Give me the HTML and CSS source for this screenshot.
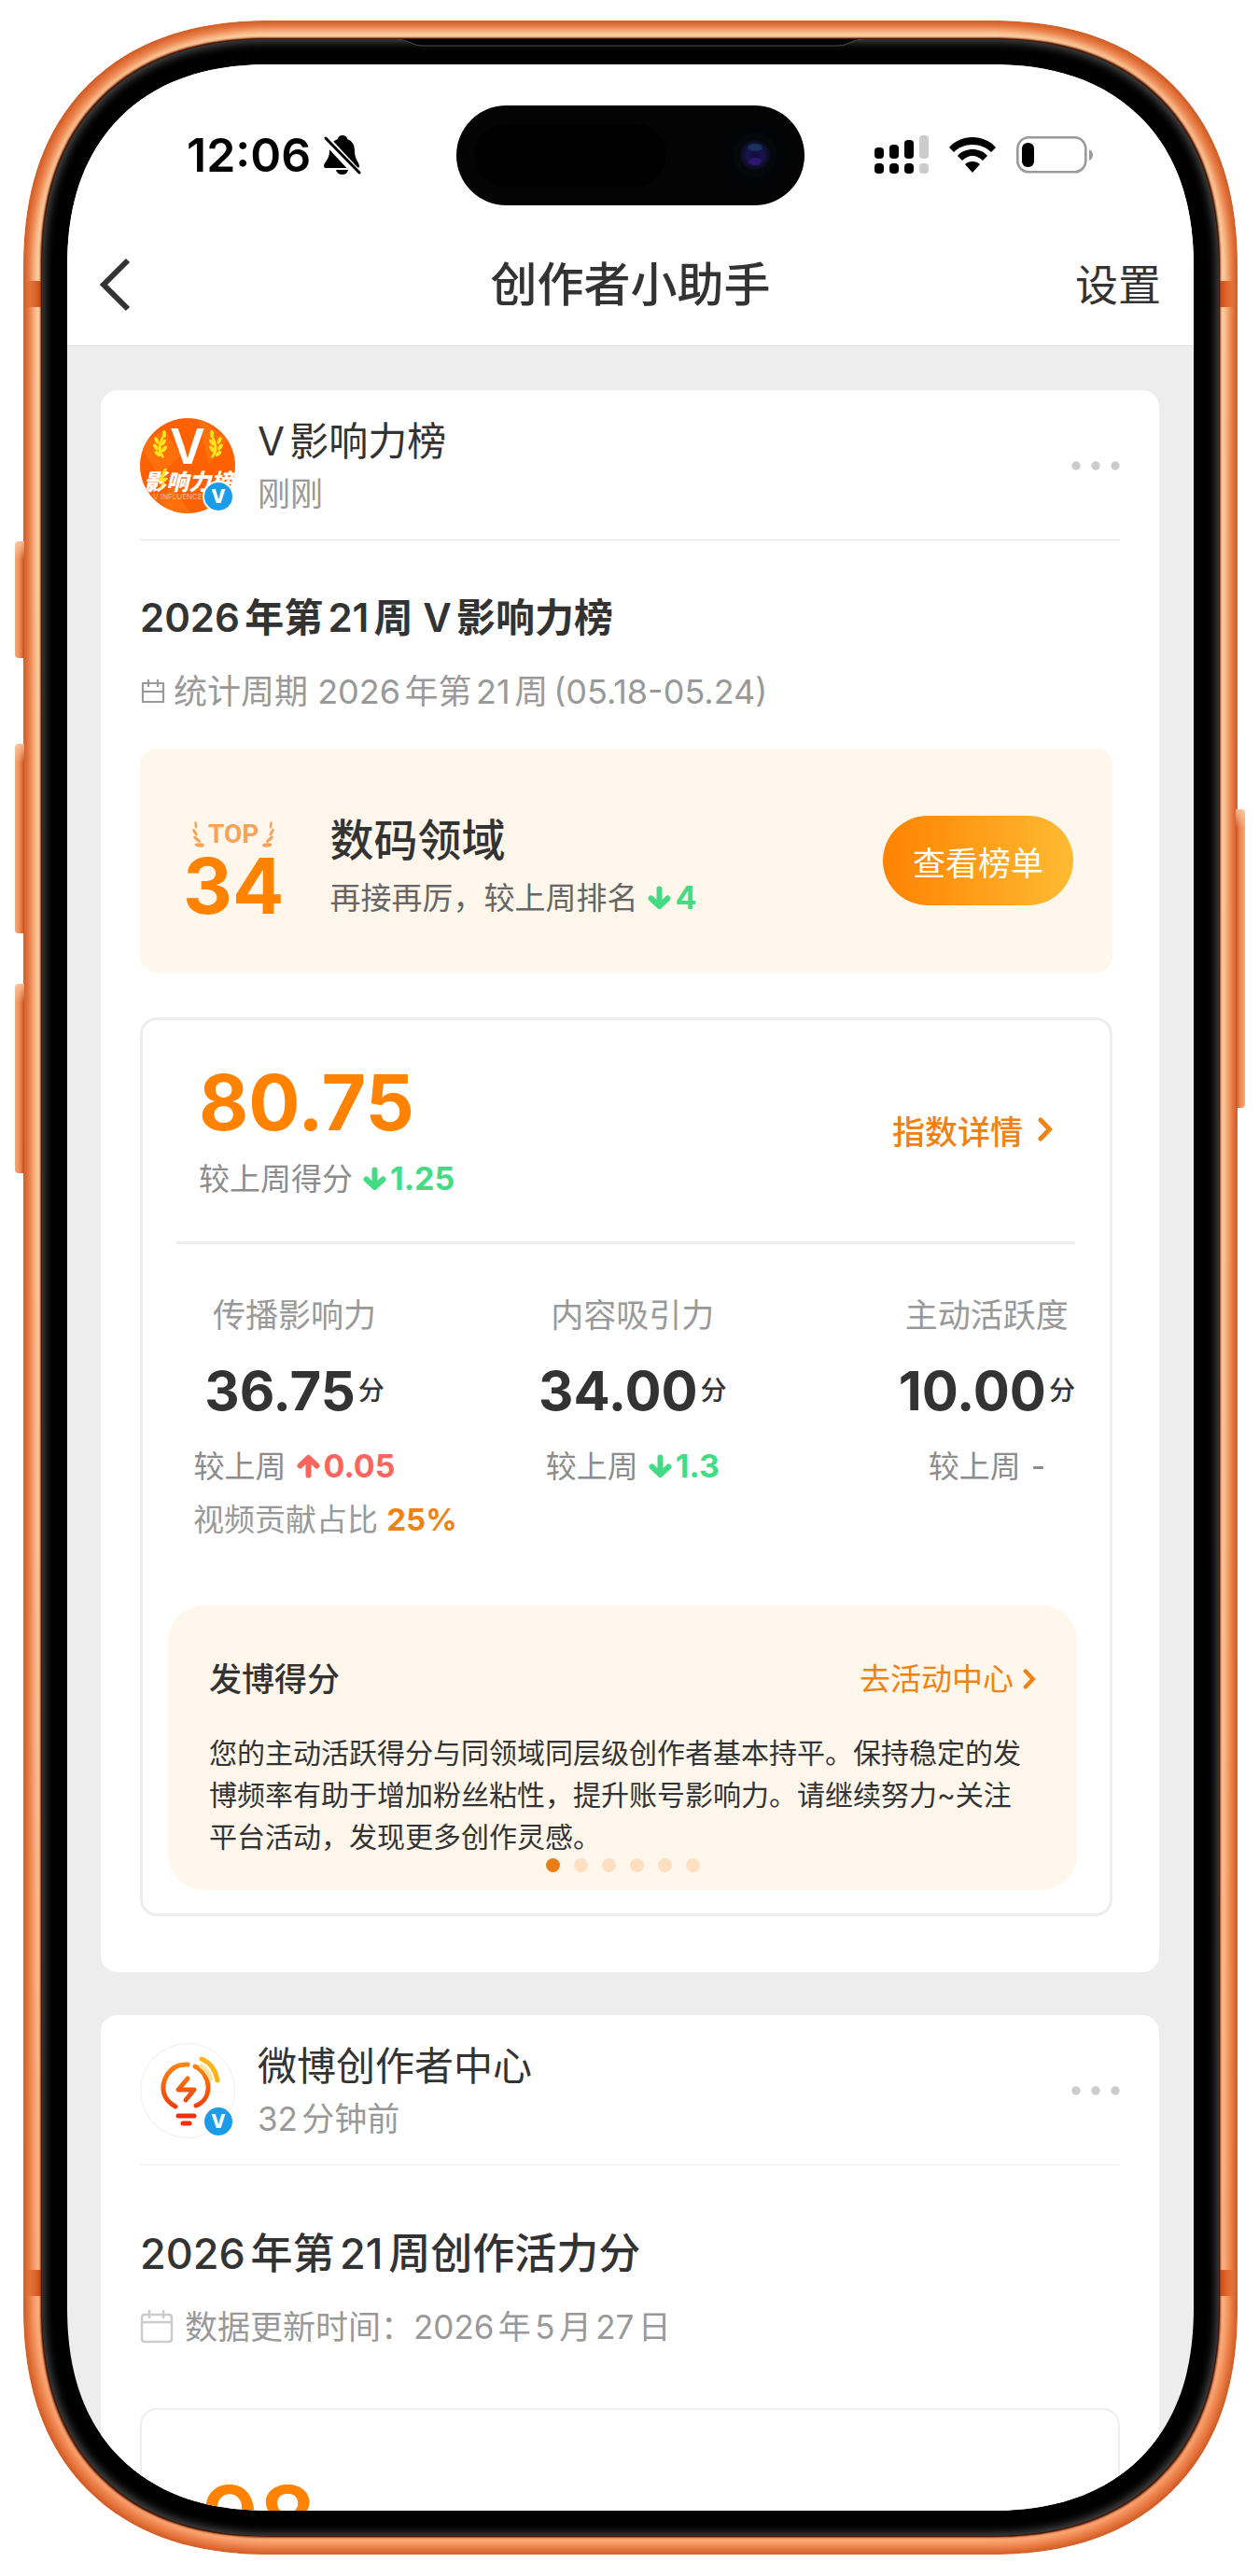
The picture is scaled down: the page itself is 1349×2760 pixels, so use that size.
FILE: index.html
```html
<!DOCTYPE html>
<html lang="zh-CN">
<head>
<meta charset="utf-8">
<meta name="viewport" content="width=device-width, initial-scale=1">
<title>创作者小助手</title>
<link rel="stylesheet" href="styles.css">
</head>
<body>
<svg width="0" height="0" class="defs" aria-hidden="true">
  <symbol id="down" viewBox="0 0 25 26"><path d="M12.500 3.500V22M3.500 13.500L12.500 22L21.500 13.500" fill="none" stroke="currentColor" stroke-width="6" stroke-linecap="round" stroke-linejoin="round"/></symbol>
  <symbol id="up" viewBox="0 0 25 26"><path d="M12.500 22.500V4M3.500 12.500L12.500 4L21.500 12.500" fill="none" stroke="currentColor" stroke-width="6" stroke-linecap="round" stroke-linejoin="round"/></symbol>
  <symbol id="next" viewBox="0 0 16 26"><path d="M3 3L12.500 13L3 23" fill="none" stroke="currentColor" stroke-width="5" stroke-linecap="round"/></symbol>
  <symbol id="dots" viewBox="0 0 52 10"><circle cx="5" cy="5" r="4.700"/><circle cx="26" cy="5" r="4.700"/><circle cx="47" cy="5" r="4.700"/></symbol>
  <symbol id="wheat" viewBox="0 0 14 34"><g fill="currentColor"><ellipse cx="9" cy="30" rx="6" ry="2.400" transform="rotate(6 9 30)"/><ellipse cx="6" cy="23" rx="5.500" ry="2" transform="rotate(42 6 23)"/><ellipse cx="3.500" cy="14.500" rx="5" ry="1.800" transform="rotate(62 3.500 14.500)"/><ellipse cx="4.500" cy="5.500" rx="4.500" ry="1.500" transform="rotate(84 4.500 5.500)"/></g></symbol>
</svg>
<div class="phone">
  <span class="key key-action"></span>
  <span class="key key-up"></span>
  <span class="key key-down"></span>
  <span class="key key-power"></span>
  <div class="bezel">
    <svg class="earpiece" viewBox="0 0 504 8" preserveAspectRatio="none" aria-hidden="true"><path d="M0 0H504C490 0 488 7 474 7H30C16 7 14 0 0 0Z" fill="#000"/><path d="M2 0C16 0 16 7 30 7H474C488 7 488 0 502 0" fill="none" stroke="#4a4a4a" stroke-width="1"/></svg>
    <div class="screen">
      <header class="status">
        <div class="clock">
          <time>12:06</time>
          <svg width="40" height="44" viewBox="0 0 40 44" aria-hidden="true"><path d="M20 1C23 1 25 3 25 5C31 7 33 12 33 18C33 27 38 30 38 34Q38 36 36 36H3Q0 36 0 34C0 30 6 27 6 18C6 12 9 7 15 5C15 3 17 1 20 1Z"/><path d="M13 38H26Q25 43 20 43Q14 43 13 38Z"/><path d="M-1 2L38 44" stroke="#fff" stroke-width="9"/><path d="M2 4L38 41" stroke="#000" stroke-width="3" stroke-linecap="round"/></svg>
        </div>
        <div class="island">
          <span class="sensor"></span>
          <svg class="camera" width="66" height="66" viewBox="0 0 66 66" aria-hidden="true"><defs><radialGradient id="lens"><stop offset="0" stop-color="#140a3c"/><stop offset=".55" stop-color="#1a1350"/><stop offset="1" stop-color="#080c18"/></radialGradient></defs><circle cx="33" cy="33" r="33" fill="#030407"/><circle cx="33" cy="33" r="24" fill="#05070b"/><circle cx="33" cy="33" r="16" fill="url(#lens)"/><ellipse cx="33" cy="25" rx="8" ry="4" fill="#1d3e66" opacity=".7"/><ellipse cx="33" cy="40" rx="7" ry="4" fill="#3c1a85" opacity=".6"/></svg>
        </div>
        <div class="signals">
          <svg width="58" height="42" viewBox="0 0 58 42" aria-label="信号"><rect y="13" width="10" height="12" rx="4"/><rect x="16" y="10" width="10" height="15" rx="4"/><rect x="32" y="5" width="10" height="20" rx="4"/><rect x="48" width="10" height="25" rx="4" fill="#ccc"/><rect y="30" width="10" height="11" rx="4"/><rect x="16" y="30" width="10" height="11" rx="4"/><rect x="32" y="30" width="10" height="11" rx="4"/><rect x="48" y="30" width="10" height="11" rx="4" fill="#ccc"/></svg>
          <svg width="50" height="38" viewBox="0 0 50 38" aria-label="无线网络"><path d="M25 0C35 0 44 4 50 11L45 16C40 11 33 8 25 8S10 11 5 16L0 11C6 4 15 0 25 0Z"/><path d="M25 13C31 13 37 15 41 20L36 25C33 22 29 20 25 20S17 22 14 25L9 20C13 15 19 13 25 13Z"/><path d="M25 26C28 26 31 27 33 29L25 38L17 29C19 27 22 26 25 26Z"/></svg>
          <svg width="83" height="40" viewBox="0 0 83 40" aria-label="电量"><rect x="1.300" y="1.300" width="73" height="37" rx="12" fill="none" stroke="#9a9a9a" stroke-width="2.600"/><path d="M78 14Q82 16 82 20T78 26Z" fill="#9a9a9a"/><rect x="6" y="7" width="13" height="26" rx="6"/></svg>
        </div>
      </header>
      <nav class="nav">
        <button class="back" type="button" aria-label="返回"><svg width="33" height="58" viewBox="0 0 33 58"><path d="M30 3L4 29L30 55" fill="none" stroke="#333" stroke-width="6"/></svg></button>
        <h1>创作者小助手</h1>
        <a class="settings" href="#settings">设置</a>
      </nav>
      <main class="feed">
        <article class="card">
          <header class="author">
            <div class="avatar">
              <svg width="102" height="102" viewBox="0 0 102 102" aria-hidden="true"><clipPath id="face"><circle cx="51" cy="51" r="51"/></clipPath><g clip-path="url(#face)"><path fill="#fd6104" d="M0 0H102V102H0Z"/><path d="M0 30L26 12L44 40L20 62ZM62 0L94 22L74 50ZM14 102L34 72L54 102ZM64 84L84 62L102 90Z" fill="#ff7a10" opacity=".6"/>
              <text x="51" y="49" class="logo-v">V</text>
              <g fill="#ffe41c"><path d="M24 43Q17 35 21 25T27 14L25 22Q20 31 26 42Z"/><ellipse cx="26" cy="17" rx="2" ry="4"/><ellipse cx="18" cy="24" rx="2" ry="4" transform="rotate(-25 18 24)"/><ellipse cx="25" cy="26" rx="2" ry="4" transform="rotate(35 25 26)"/><ellipse cx="17" cy="31" rx="2" ry="4" transform="rotate(-35 17 31)"/><ellipse cx="26" cy="33" rx="2" ry="4" transform="rotate(35 26 33)"/><ellipse cx="19" cy="38" rx="2" ry="4" transform="rotate(-45 19 38)"/><path d="M78 43Q85 35 81 25T75 14L77 22Q82 31 76 42Z"/><ellipse cx="77" cy="17" rx="2" ry="4"/><ellipse cx="85" cy="24" rx="2" ry="4" transform="rotate(25 85 24)"/><ellipse cx="77" cy="26" rx="2" ry="4" transform="rotate(-35 77 26)"/><ellipse cx="86" cy="31" rx="2" ry="4" transform="rotate(35 86 31)"/><ellipse cx="77" cy="33" rx="2" ry="4" transform="rotate(-35 77 33)"/><ellipse cx="84" cy="38" rx="2" ry="4" transform="rotate(45 84 38)"/></g>
              <text x="52" y="77" class="logo-name">影响力榜</text><path d="M26 54L20 67H24L21 78L29 64H25L29 54Z" fill="#ffe41c"/><text x="14" y="87" class="logo-sub">V INFLUENCE</text></g></svg>
              <span class="verified">V</span>
            </div>
            <div class="who"><a class="name" href="#v">V影响力榜</a><span class="when">刚刚</span></div>
            <button class="more" type="button" aria-label="更多"><svg width="52" height="10"><use href="#dots"/></svg></button>
          </header>
          <div class="report">
            <h2>2026年第21周 V影响力榜</h2>
            <p class="period"><svg width="28" height="28" viewBox="0 0 28 28" aria-hidden="true"><path d="M3 5H25V25H3ZM3 14H25M9 1V9M19 1V9" fill="none" stroke="#999" stroke-width="2.200" stroke-linejoin="round"/></svg><span>统计周期 2026年第21周<span class="range">(05.18-05.24)</span></span></p>
            <section class="rank">
              <div class="place"><span class="top"><svg width="14" height="30"><use href="#wheat"/></svg>TOP<svg class="flip" width="14" height="30"><use href="#wheat"/></svg></span><strong>34</strong></div>
              <div class="field"><h3>数码领域</h3><p>再接再厉，较上周排名 <b class="fall"><svg width="25" height="26"><use href="#down"/></svg>4</b></p></div>
              <button class="board" type="button">查看榜单</button>
            </section>
            <section class="index">
              <div class="total">
                <div><strong class="score">80.75</strong><p class="change">较上周得分 <b class="fall"><svg width="25" height="26"><use href="#down"/></svg>1.25</b></p></div>
                <a class="detail" href="#detail">指数详情<svg width="16" height="26"><use href="#next"/></svg></a>
              </div>
              <div class="stats">
                <div class="stat">
                  <span class="label">传播影响力</span>
                  <span class="value">36.75<small>分</small></span>
                  <span class="change">较上周 <b class="rise"><svg width="25" height="26"><use href="#up"/></svg>0.05</b></span>
                  <span class="share">视频贡献占比 <b>25%</b></span>
                </div>
                <div class="stat">
                  <span class="label">内容吸引力</span>
                  <span class="value">34.00<small>分</small></span>
                  <span class="change">较上周 <b class="fall"><svg width="25" height="26"><use href="#down"/></svg>1.3</b></span>
                </div>
                <div class="stat">
                  <span class="label">主动活跃度</span>
                  <span class="value">10.00<small>分</small></span>
                  <span class="change">较上周 <b>-</b></span>
                </div>
              </div>
              <div class="tip">
                <div class="tip-head"><h4>发博得分</h4><a href="#events">去活动中心<svg width="14" height="22"><use href="#next"/></svg></a></div>
                <p>您的主动活跃得分与同领域同层级创作者基本持平。保持稳定的发博频率有助于增加粉丝粘性，提升账号影响力。请继续努力~关注平台活动，发现更多创作灵感。</p>
                <div class="pager"><i class="on"></i><i></i><i></i><i></i><i></i><i></i></div>
              </div>
            </section>
          </div>
        </article>
        <article class="card">
          <header class="author faint">
            <div class="avatar">
              <svg width="102" height="102" viewBox="0 0 102 102" aria-hidden="true"><defs><linearGradient id="bulb" gradientUnits="userSpaceOnUse" x1="0" y1="20" x2="0" y2="72"><stop offset="0" stop-color="#fb8a0c"/><stop offset="1" stop-color="#f0380e"/></linearGradient></defs><circle cx="51" cy="51" r="50.500" fill="#fff" stroke="#eee"/><g fill="none" stroke="url(#bulb)" stroke-width="5" stroke-linecap="round" stroke-linejoin="round"><path d="M51 23Q37 22 29 34C21 48 25 61 38 68"/><path d="M59 25C76 33 79 59 60 67"/><path d="M51 38L41 50H58L49 61"/></g><path d="M66 17Q80 23 83 40" fill="none" stroke="#fbb416" stroke-width="5" stroke-linecap="round"/><path d="M66 25Q72 29 76 38" fill="none" stroke="#fde3a0" stroke-width="5" stroke-linecap="round"/><path d="M41 78H58M46 86H53" stroke="#f03010" stroke-width="5" stroke-linecap="round"/></svg>
              <span class="verified">V</span>
            </div>
            <div class="who"><a class="name" href="#center">微博创作者中心</a><span class="when">32分钟前</span></div>
            <button class="more" type="button" aria-label="更多"><svg width="52" height="10"><use href="#dots"/></svg></button>
          </header>
          <div class="vitality">
            <h2>2026年第21周创作活力分</h2>
            <p class="period"><svg width="36" height="36" viewBox="0 0 36 36" aria-hidden="true"><path d="M5 5H31Q34 5 34 8V31Q34 34 31 34H5Q2 34 2 31V8Q2 5 5 5ZM2 13H34M10 0V9M25 0V9" fill="none" stroke="#ccc" stroke-width="2.500"/></svg>数据更新时间：2026年5月27日</p>
            <section class="panel"><strong>98</strong></section>
          </div>
        </article>
      </main>
    </div>
  </div>
</div>
</body>
</html>
```
FILE: styles.css
```css
* { box-sizing: border-box; margin: 0; padding: 0; }
body {
  padding: 22px 23px 22px 25px;
  background: #fff;
  color: #333;
  font-family: Inter, "Noto Sans CJK SC", sans-serif;
  text-autospace: normal;
}
a { color: inherit; text-decoration: none; }
button { border: 0; background: none; font: inherit; color: inherit; cursor: pointer; }
svg { display: block; flex: none; }
.defs { position: absolute; }

/* device */
.phone {
  position: relative;
  display: flex;
  aspect-ratio: 1301 / 2715;
  padding: 20px;
  border-radius: 236px;
  background:
    linear-gradient(#d4561a, #d4561a) 0 279px / 100% 28px no-repeat,
    linear-gradient(#d4561a, #d4561a) 0 2410px / 100% 28px no-repeat,
    linear-gradient(#ffdcb0, #fdd0a4 60%, #ffae7c);
  box-shadow: inset 0 0 6px 3px #cc5822, inset 0 0 9px 11px #ea7b44;
}
.key {
  position: absolute;
  left: -9px;
  width: 10px;
  border-radius: 4px 0 0 4px;
  background:
    linear-gradient(rgb(255 205 165 / 80%), transparent 20px),
    linear-gradient(90deg, #f6a878, #ee8b54 50%, #c4501e);
}
.key-action { top: 558px; height: 125px; }
.key-up { top: 775px; height: 203px; }
.key-down { top: 1032px; height: 203px; }
.key-power {
  top: 845px;
  right: -8px;
  left: auto;
  height: 320px;
  border-radius: 0 4px 4px 0;
  background:
    linear-gradient(rgb(255 205 165 / 80%), transparent 20px),
    linear-gradient(270deg, #f6a878, #ee8b54 50%, #c4501e);
}
.bezel {
  position: relative;
  display: flex;
  flex: 1;
  min-width: 0;
  padding: 27px;
  border-radius: 216px;
  background: #000;
  box-shadow: 0 0 0 1px #4a1404, 0 0 2px 2px #8a3510, inset 0 0 10px 3px #484848;
}
.earpiece { position: absolute; top: 0; left: 30%; width: 40%; height: 8px; }
.screen {
  display: flex;
  flex: 1;
  flex-direction: column;
  min-width: 0;
  overflow: hidden;
  border-radius: 189px;
  background: #ededed;
}
@supports (corner-shape: superellipse(1.2)) {
  .phone, .bezel, .screen { corner-shape: superellipse(1.2); }
  .phone { border-radius: 265px; }
  .bezel { border-radius: 245px; }
  .screen { border-radius: 218px; }
}

/* status bar */
.status {
  display: grid;
  grid-template-columns: 1fr 373px 1fr;
  flex: none;
  align-items: center;
  height: 194px;
  background: #fff;
}
.clock { display: flex; align-items: center; gap: 14px; padding-left: 128px; }
.clock time { color: #000; font-size: 50px; font-weight: 600; line-height: 60px; }
.island {
  display: flex;
  align-items: center;
  justify-content: space-between;
  height: 107px;
  padding: 0 20px;
  border-radius: 54px;
  background: #040404;
}
.sensor { width: 205px; height: 67px; border-radius: 34px; background: #000; }
.signals { display: flex; align-items: center; gap: 22px; padding-left: 75px; }

/* navigation */
.nav {
  display: grid;
  grid-template-columns: 1fr auto 1fr;
  flex: none;
  align-items: center;
  height: 108px;
  padding: 0 35px 24px 35px;
  border-bottom: 1px solid #dfdfdf;
  background: #fff;
}
.back { justify-self: start; }
.nav h1 { font-size: 50px; font-weight: 500; line-height: 60px; }
.settings { justify-self: end; font-size: 46px; line-height: 60px; }

/* cards */
.feed { display: flex; flex: none; flex-direction: column; gap: 46px; padding: 47px 37px 0 36px; }
.card { padding: 0 42px 60px; border-radius: 18px; background: #fff; }
.author {
  display: flex;
  align-items: center;
  gap: 24px;
  padding: 23px 0 21px;
  border-bottom: 1px solid #e4e4e4;
}
.author.faint { border-color: #f0f0f0; }
.avatar { position: relative; }
.logo-v { fill: #fff; font: 600 52px Inter, sans-serif; text-anchor: middle; }
.logo-name { fill: #fff; font: italic 900 24px "Noto Sans CJK SC", sans-serif; text-anchor: middle; }
.logo-sub { fill: #ffb98a; font: 8px Inter, sans-serif; }
.verified {
  position: absolute;
  right: 1px;
  bottom: 1px;
  width: 34px;
  height: 34px;
  border: 2px solid #fff;
  border-radius: 50%;
  background: #1b9be8;
  color: #fff;
  font-size: 20px;
  font-weight: 800;
  line-height: 30px;
  text-align: center;
}
.who { display: flex; flex: 1; flex-direction: column; padding-top: 4px; }
.name { font-size: 42px; line-height: 56px; }
.when { color: #999; font-size: 35px; line-height: 56px; }
.more { fill: #ccc; }
.card h2 { font-weight: 500; line-height: 60px; }
.period { display: flex; align-items: center; color: #999; line-height: 50px; }

/* ranking report */
.report { padding: 53px 8px 0 0; }
.report h2 { font-size: 42px; font-weight: 600; }
.report .period { gap: 8px; margin-top: 24px; font-size: 36px; }
.range { padding-left: 6px; }
.rank {
  display: flex;
  align-items: center;
  height: 240px;
  margin-top: 36px;
  padding: 0 42px 0 46px;
  border-radius: 18px;
  background: #fff7ec;
}
.place { display: flex; flex-direction: column; align-items: center; padding-top: 24px; color: #ff8200; }
.place strong { font-size: 82px; font-weight: 700; line-height: 80px; }
.top { display: flex; align-items: center; gap: 4px; color: #f5a35a; font: 700 28px/32px Roboto, sans-serif; }
.flip { transform: scaleX(-1); }
.field { flex: 1; padding: 16px 0 0 49px; }
.field h3 { font-size: 47px; font-weight: 500; line-height: 64px; }
.field p { display: flex; align-items: center; gap: 11px; color: #666; font-size: 33px; line-height: 60px; }
.fall, .rise { display: flex; align-items: center; gap: 4px; font-size: 34px; font-weight: 700; }
.fall { color: #44db85; }
.rise { color: #fb6560; }
.board {
  width: 204px;
  height: 96px;
  border-radius: 48px;
  background: linear-gradient(90deg, #ff8200, #ffbb33);
  color: #fff;
  font-size: 35px;
}
.index {
  margin-top: 48px;
  padding: 48px 0 25px;
  border: 3px solid #ededed;
  border-radius: 18px;
}
.total {
  display: flex;
  align-items: center;
  justify-content: space-between;
  margin: 0 37px 0 36px;
  padding: 0 24px 42px 24px;
  border-bottom: 3px solid #ededed;
}
.score { display: block; color: #ff8200; font-size: 82px; font-weight: 700; line-height: 82px; }
.change { display: flex; align-items: center; gap: 11px; color: #8c8c8c; font-size: 33px; line-height: 50px; }
.total .change { margin-top: 15px; }
.change b:not([class]) { font-weight: 500; }
.detail { display: flex; align-items: center; gap: 16px; padding-bottom: 9px; color: #f08213; font-size: 35px; font-weight: 500; }
.stats { display: flex; gap: 153px; padding: 51px 37px 0 54px; }
.stat { display: flex; flex-direction: column; align-items: center; white-space: nowrap; }
.stat:first-child { width: 217px; }
.stat:last-child { margin-left: auto; }
.label { color: #999; font-size: 35px; line-height: 50px; }
.value { display: flex; align-items: center; gap: 3px; margin-top: 21px; font-size: 58px; font-weight: 700; line-height: 70px; }
.value small { font-size: 28px; font-weight: 500; }
.stat .change { margin-top: 21px; }
.share { align-self: flex-start; margin-top: 7px; color: #999; font-size: 33px; line-height: 50px; }
.share b { color: #f08213; }
.tip {
  margin: 67px 35px 0 27px;
  padding: 54px 44px 19px;
  border-radius: 38px;
  background: #fff7ec;
}
.tip-head { display: flex; align-items: center; justify-content: space-between; line-height: 50px; }
.tip-head h4 { font-size: 35px; font-weight: 500; }
.tip-head a { display: flex; align-items: center; gap: 10px; color: #f08213; font-size: 33px; }
.tip p { margin-top: 32px; font-size: 30px; line-height: 45px; }
.pager { display: flex; justify-content: center; gap: 15px; }
.pager i { width: 15px; height: 15px; border-radius: 50%; background: #ffdfbf; }
.pager .on { background: #e97f12; }

/* vitality report */
.vitality { padding-top: 65px; }
.vitality h2 { font-size: 45px; }
.vitality .period { gap: 12px; margin-top: 23px; font-size: 35px; }
.panel { margin-top: 62px; padding: 68px 64px; border: 2px solid #eee; border-radius: 18px; }
.panel strong { color: #ff8200; font-size: 96px; font-weight: 600; line-height: 96px; }
```
